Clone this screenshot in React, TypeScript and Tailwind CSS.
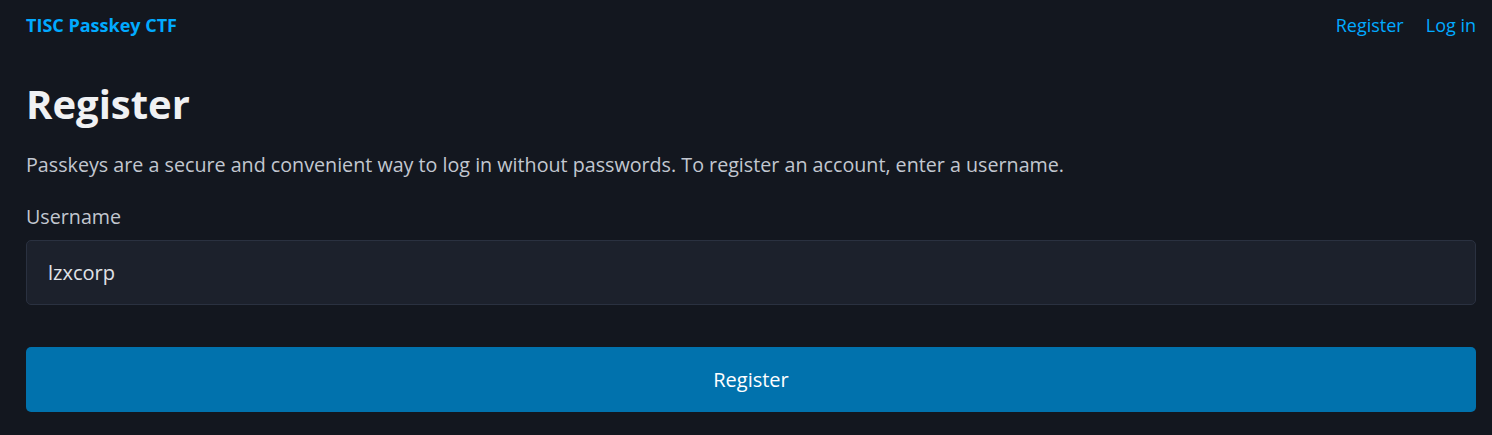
export default function App() {
  return (
    <div className="min-h-[435px] bg-[#13171f] pl-[26px] pr-[16px] text-[#c2c7d0]" style={{ fontFamily: '"Open Sans", "Noto Sans", sans-serif' }}>
      <nav className="flex h-[50px] items-center justify-between">
        <a className="text-[18px] font-bold text-[#01aaff]">TISC Passkey CTF</a>
        <ul className="flex items-center gap-[22px] text-[18px] text-[#01aaff]">
          <li>Register</li>
          <li>Log in</li>
        </ul>
      </nav>
      <main>
        <h1 className="mt-[32px] text-[40px] font-bold leading-[1.1] text-[#f0f1f3]">Register</h1>
        <p className="mt-[24px] text-[19.7px] leading-[1.5]">Passkeys are a secure and convenient way to log in without passwords. To register an account, enter a username.</p>
        <label className="mt-[22px] block text-[19.7px] leading-[1.5]">Username</label>
        <div className="mt-[9px] flex h-[65px] items-center rounded-[5px] border border-[#2a3140] bg-[#1c212c] px-[21px] text-[20px] text-[#e0e3e7]">lzxcorp</div>
        <button className="mt-[42px] flex h-[65px] w-full items-center justify-center rounded-[5px] bg-[#0172ad] text-[20px] text-white">Register</button>
      </main>
    </div>
  );
}
